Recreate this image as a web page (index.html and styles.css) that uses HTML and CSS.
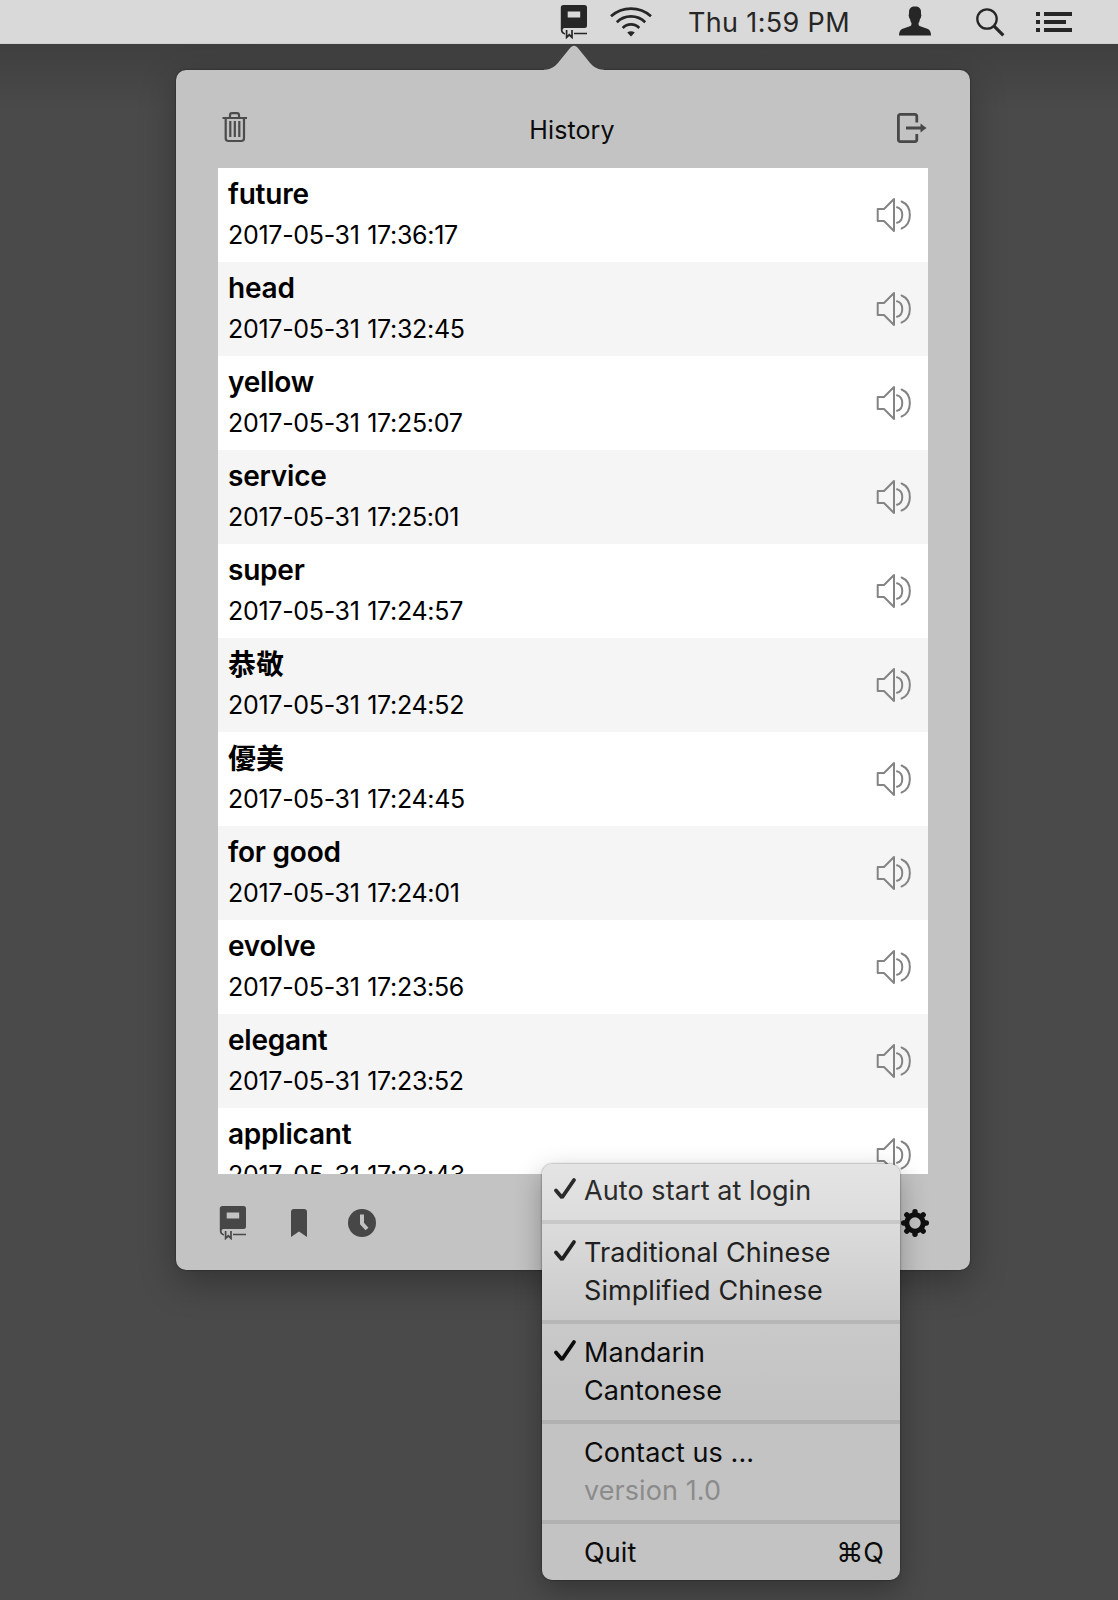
FILE: index.html
```
<!DOCTYPE html>
<html lang="en">
<head>
<meta charset="utf-8">
<title>History</title>
<link rel="stylesheet" href="styles.css">
</head>
<body>
<svg class="defs" aria-hidden="true">
  <symbol id="book" viewBox="0 0 28 34">
    <path fill="currentColor" fill-rule="evenodd" d="M3.500 0H24.500Q27 0 27 2.500V20.500Q27 23 24.500 23H4.500Q2.700 23 2.500 25Q2.500 27 4.500 28H5V29.500H4.500Q1 28.500 .8 25V2.500Q.8 0 3.500 0ZM7.700 6.500V12.500H20.200V6.500Z"/>
    <path fill="none" stroke="currentColor" stroke-width="1.700" d="M14 28.500H27M6.600 25V32.400L9.300 29.800L12 32.400V25"/>
  </symbol>
  <symbol id="speaker" viewBox="0 0 36 36">
    <path fill="none" stroke="#848484" stroke-width="2" stroke-linejoin="round" stroke-linecap="round" d="M1.700 12H8L18 2V34L8 24H1.700ZM21 10.200C28 12 28 24 21 25.800M25.600 4.500C36.600 9 36.600 27 25.600 31.500"/>
  </symbol>
  <symbol id="check" viewBox="0 0 24 24">
    <path fill="none" stroke="currentColor" stroke-width="3.800" stroke-linecap="round" stroke-linejoin="bevel" d="M3 13.500L9 20.500L21 3"/>
  </symbol>
</svg>

<header class="menubar">
  <svg class="mb-book" width="28" height="34"><use href="#book"/></svg>
  <svg class="mb-wifi" width="42" height="30" viewBox="0 0 42 30">
    <path fill="none" stroke="currentColor" stroke-width="2.700" d="M1 9.300A30 30 0 0 1 41 9.300M6.800 15.300A20 20 0 0 1 35.200 15.300M12.700 21A11.500 11.500 0 0 1 29.300 21"/>
    <path fill="currentColor" d="M17.200 25.500Q21 22.800 24.800 25.500L21 29.500Z"/>
  </svg>
  <span class="mb-clock">Thu 1:59 PM</span>
  <svg class="mb-user" width="32" height="30" viewBox="0 0 32 30">
    <path fill="currentColor" d="M16 .5C20 .5 22 2.500 22 6V8Q22.800 9 22 11Q21.800 12.500 21 13Q20.500 16 19.500 17Q19.300 19.500 20.500 20L29 23Q32 24.500 32 29.500H0Q0 24.500 3 23L11.500 20Q12.700 19.500 12.500 17Q11.500 16 11 13Q10.200 12.500 10 11Q9.200 9 10 8V6C10 2.500 12 .5 16 .5Z"/>
  </svg>
  <svg class="mb-search" width="30" height="30" viewBox="0 0 30 30">
    <g fill="none" stroke="currentColor"><circle cx="12" cy="12" r="9.700" stroke-width="2.300"/><path stroke-width="3.200" d="M18.800 18.800L28.300 28.300"/></g>
  </svg>
  <svg class="mb-list" width="36" height="20" viewBox="0 0 36 20">
    <path fill="currentColor" d="M0 0H4V4H0ZM8 0H36V4H8ZM0 8H4V12H0ZM8 8H30V12H8ZM0 16H4V20H0ZM8 16H36V20H8Z"/>
  </svg>
</header>

<main class="popover">
  <svg class="arrow" width="68" height="26" viewBox="0 0 68 26"><path fill="#c3c3c3" d="M4 26V24.800C12 24.600 16 20.500 19.500 16L30.500 2.500Q34 -.8 37.500 2.500L48.500 16C52 20.500 56 24.600 64 24.800V26Z"/></svg>
  <div class="toolbar">
    <svg width="26" height="32" viewBox="0 0 26 32">
      <g fill="none" stroke="#4c4c4c" stroke-width="2.200"><path d="M.5 6H25M8 5.500V3Q8 1.200 10 1.200H15Q17 1.200 17 3V5.500M3.700 6.500V26.300Q3.700 29 6.400 29H19.300Q22 29 22 26.300V6.500"/><path d="M8.300 9V25M12.800 9V25M17.300 9V25"/></g>
    </svg>
    <h1 class="title">History</h1>
    <svg width="32" height="32" viewBox="0 0 32 32">
      <path fill="none" stroke="#484848" stroke-width="2.800" d="M20.800 10.500V4.400Q20.800 2.400 18.800 2.400H4.400Q2.400 2.400 2.400 4.400V27.600Q2.400 29.600 4.400 29.600H18.800Q20.800 29.600 20.800 27.600V22M10 16H26"/>
      <path fill="#484848" d="M24.500 11.500L30.500 16L24.500 20.500Z"/>
    </svg>
  </div>

  <ul class="history">
    <li class="row"><div><b class="word">future</b><time class="date">2017-05-31 17:36:17</time></div><svg width="36" height="36"><use href="#speaker"/></svg></li>
    <li class="row"><div><b class="word">head</b><time class="date">2017-05-31 17:32:45</time></div><svg width="36" height="36"><use href="#speaker"/></svg></li>
    <li class="row"><div><b class="word">yellow</b><time class="date">2017-05-31 17:25:07</time></div><svg width="36" height="36"><use href="#speaker"/></svg></li>
    <li class="row"><div><b class="word">service</b><time class="date">2017-05-31 17:25:01</time></div><svg width="36" height="36"><use href="#speaker"/></svg></li>
    <li class="row"><div><b class="word">super</b><time class="date">2017-05-31 17:24:57</time></div><svg width="36" height="36"><use href="#speaker"/></svg></li>
    <li class="row"><div><b class="word cjk" lang="zh-Hant">恭敬</b><time class="date">2017-05-31 17:24:52</time></div><svg width="36" height="36"><use href="#speaker"/></svg></li>
    <li class="row"><div><b class="word cjk" lang="zh-Hant">優美</b><time class="date">2017-05-31 17:24:45</time></div><svg width="36" height="36"><use href="#speaker"/></svg></li>
    <li class="row"><div><b class="word">for good</b><time class="date">2017-05-31 17:24:01</time></div><svg width="36" height="36"><use href="#speaker"/></svg></li>
    <li class="row"><div><b class="word">evolve</b><time class="date">2017-05-31 17:23:56</time></div><svg width="36" height="36"><use href="#speaker"/></svg></li>
    <li class="row"><div><b class="word">elegant</b><time class="date">2017-05-31 17:23:52</time></div><svg width="36" height="36"><use href="#speaker"/></svg></li>
    <li class="row"><div><b class="word">applicant</b><time class="date">2017-05-31 17:23:43</time></div><svg width="36" height="36"><use href="#speaker"/></svg></li>
  </ul>

  <footer class="tabs">
    <svg class="tab-book" width="28" height="34"><use href="#book"/></svg>
    <svg class="tab-mark" width="16" height="28" viewBox="0 0 16 28"><path fill="currentColor" d="M3 0H13Q16 0 16 3V28L8 22.500L0 28V3Q0 0 3 0Z"/></svg>
    <svg class="tab-clock" width="28" height="28" viewBox="0 0 28 28"><circle cx="14" cy="14" r="14" fill="currentColor"/><path fill="none" stroke="#c3c3c3" stroke-width="4" d="M14 5.500V14.500L19 20"/></svg>
    <svg class="tab-gear" width="28" height="28" viewBox="-14 -14 28 28">
      <circle r="8.200" fill="none" stroke="currentColor" stroke-width="5"/>
      <path fill="none" stroke="currentColor" stroke-width="5.400" stroke-linecap="round" d="M0 -9V-11.300M0 9V11.300M-9 0H-11.300M9 0H11.300M6.600 6.600L8.200 8.200M-6.600 6.600L-8.200 8.200M6.600 -6.600L8.200 -8.200M-6.600 -6.600L-8.200 -8.200"/>
    </svg>
  </footer>
</main>

<nav class="menu">
  <div class="item i1"><svg width="24" height="24"><use href="#check"/></svg><span class="label">Auto start at login</span></div>
  <hr class="sep">
  <div class="item i2"><svg width="24" height="24"><use href="#check"/></svg><span class="label">Traditional Chinese</span></div>
  <div class="item i2"><span class="label">Simplified Chinese</span></div>
  <hr class="sep">
  <div class="item"><svg width="24" height="24"><use href="#check"/></svg><span class="label">Mandarin</span></div>
  <div class="item"><span class="label">Cantonese</span></div>
  <hr class="sep">
  <div class="item"><span class="label">Contact us ...</span></div>
  <div class="item disabled"><span class="label">version 1.0</span></div>
  <hr class="sep">
  <div class="item"><span class="label">Quit</span><span class="key">⌘Q</span></div>
</nav>
</body>
</html>
```
FILE: styles.css
```
* { box-sizing: border-box; }

body {
  margin: 0;
  height: 1600px;
  position: relative;
  overflow: hidden;
  background: linear-gradient(#3f3f3f 44px, #4a4a4a 110px);
  font-family: Inter, "Liberation Sans", "Noto Sans CJK TC", sans-serif;
  color: #0c0c0c;
}

svg { display: block; flex: none; }
.defs { position: absolute; width: 0; height: 0; }

.menubar {
  display: flex;
  align-items: flex-start;
  height: 44px;
  padding-left: 560px;
  background: #d9d9d9;
  border-bottom: 1px solid #d0d0d0;
  color: #262626;
}
.mb-book { margin-top: 5px; }
.mb-wifi { margin: 7px 0 0 22px; }
.mb-clock {
  width: 170px;
  margin-left: 36px;
  font-size: 27px;
  font-weight: 420;
  line-height: 46px;
  letter-spacing: 0.35px;
  white-space: nowrap;
}
.mb-user { margin: 6px 0 0 41px; }
.mb-search { margin: 7px 0 0 44px; }
.mb-list { margin: 12px 0 0 31px; }

.popover {
  position: relative;
  width: 794px;
  height: 1200px;
  margin: 26px 0 0 176px;
  padding: 0 42px;
  border-radius: 10px;
  background: #c3c3c3;
  box-shadow: 0 0 2px rgba(0, 0, 0, .6), 0 12px 36px rgba(0, 0, 0, .3);
}
.arrow { position: absolute; left: 364px; top: -25px; }

.toolbar {
  display: flex;
  justify-content: space-between;
  height: 98px;
  padding: 42px 0 0 4px;
}
.title {
  margin: 0;
  font-size: 25px;
  font-weight: 420;
  line-height: 36px;
  letter-spacing: 0.1px;
}

.history {
  height: 1006px;
  margin: 0;
  padding: 0;
  overflow: hidden;
  list-style: none;
  background: #fff;
  color: #000;
}
.row {
  display: flex;
  justify-content: space-between;
  height: 94px;
  padding: 6px 16px 0 10px;
}
.row:nth-child(even) { background: #f5f5f5; }
.row svg { margin-top: 23px; }
.word, .date { display: block; white-space: nowrap; }
.word {
  height: 42px;
  font-size: 28px;
  font-weight: 620;
  line-height: 41px;
  letter-spacing: -0.22px;
}
.cjk {
  font-family: "Noto Sans CJK TC", sans-serif;
  font-weight: 700;
  line-height: 38px;
  letter-spacing: 0;
}
.date {
  font-size: 25px;
  font-weight: 420;
  line-height: 39px;
  letter-spacing: -0.3px;
  word-spacing: 0.8px;
}

.tabs { display: flex; height: 96px; padding: 32px 0 0 1px; color: #474747; }
.tab-mark { margin: 3px 0 0 44px; }
.tab-clock { margin: 3px 0 0 41px; }
.tab-gear { margin: 3px -1px 0 auto; color: #111; }

.menu {
  position: absolute;
  left: 542px;
  top: 1164px;
  width: 358px;
  height: 416px;
  padding: 8px 0;
  border-radius: 10px;
  background: linear-gradient(#e4e4e4, #dcdcdc 60px, #c9c9c9 160px, #c3c3c3 240px);
  box-shadow: 0 0 2px rgba(0, 0, 0, .6), 0 10px 28px rgba(0, 0, 0, .3);
}
.item {
  position: relative;
  display: flex;
  justify-content: space-between;
  height: 38px;
  padding: 0 16px 0 42px;
  font-size: 27px;
  font-weight: 420;
  line-height: 38px;
  letter-spacing: 0.08px;
  white-space: nowrap;
}
.item svg { position: absolute; left: 11px; top: 5px; }
.i1 { color: #2b2b2b; }
.i2 { color: #202020; }
.disabled { color: #8b8b8b; }
.sep { height: 4px; margin: 10px 0; border: 0; background: rgba(0, 0, 0, .09); }
```
